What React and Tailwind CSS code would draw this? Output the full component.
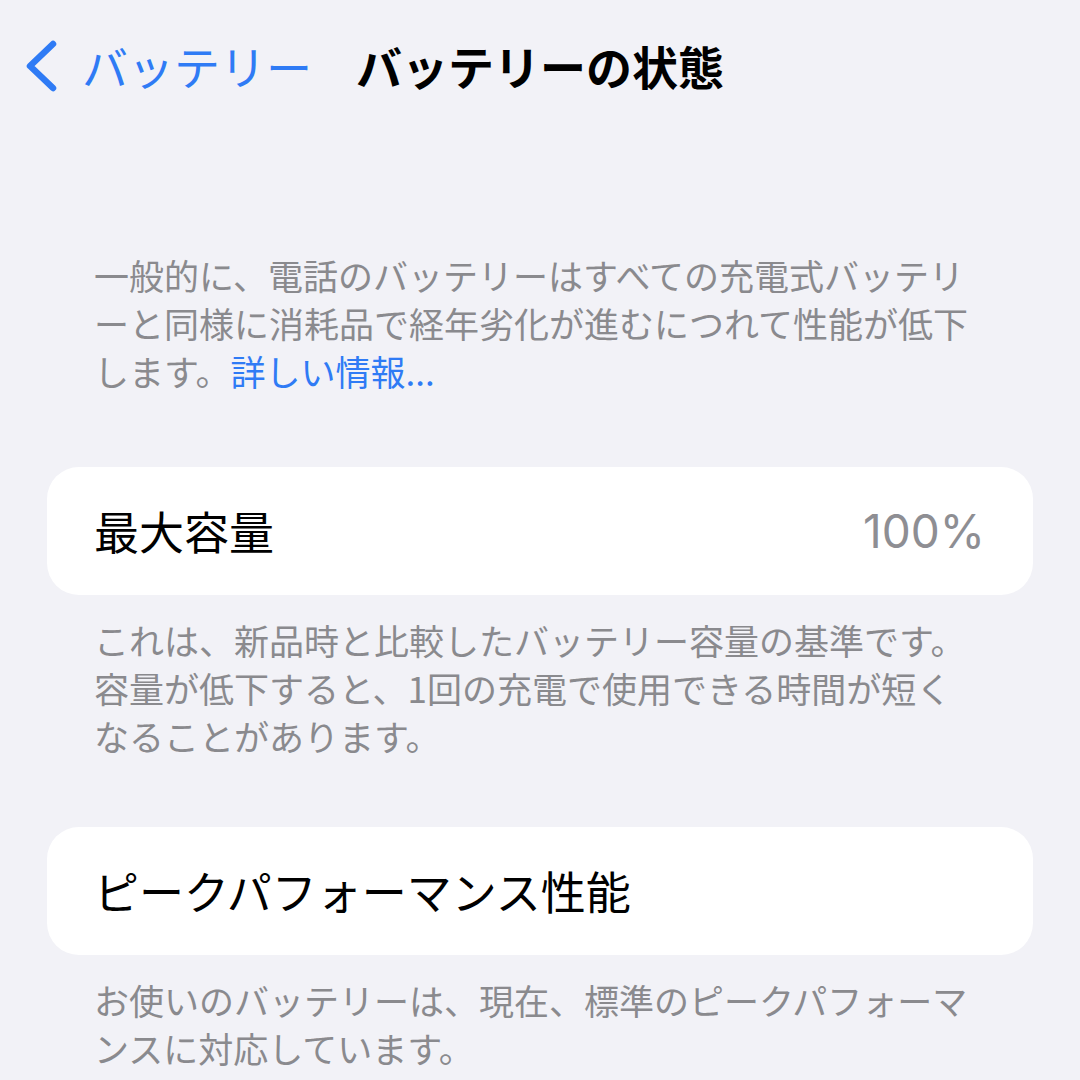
import React from 'react';

const FONT = '"Noto Sans CJK JP", "Noto Sans", Inter, sans-serif';

const Footnote = ({ lines, className = '' }) => (
  <div className={`px-[94px] text-[35px] leading-[48px] text-[#8a8a8e] ${className}`}>
    {lines.map((line, i) => (
      <div key={i} className="whitespace-nowrap">{line}</div>
    ))}
  </div>
);

const Card = ({ label, value, className = '' }) => (
  <div className={`mx-[47px] h-[128px] rounded-[32px] bg-white flex items-center justify-between pl-[47px] pr-[48px] ${className}`}>
    <span className="text-[45px] text-black">{label}</span>
    {value && <span className="text-[46px] text-[#8e8e93] font-['Inter']">{value}</span>}
  </div>
);

export default function App() {
  return (
    <div className="w-[1080px] h-[1080px] overflow-hidden bg-[#f2f2f7]" style={{ fontFamily: FONT }}>
      {/* nav bar */}
      <div className="h-[130px] flex items-center pl-[20px]">
        <svg width="40" height="60" viewBox="0 0 40 60" fill="none">
          <path d="M33 9 L10 31 L33 53" stroke="#2f7bf5" strokeWidth="6.5" strokeLinecap="round" strokeLinejoin="round" />
        </svg>
        <span className="ml-[22px] text-[46px] text-[#2f7bf5]">バッテリー</span>
        <span className="ml-[44px] text-[46px] font-bold text-black">バッテリーの状態</span>
      </div>

      <Footnote
        className="mt-[121px]"
        lines={[
          '一般的に、電話のバッテリーはすべての充電式バッテリ',
          'ーと同様に消耗品で経年劣化が進むにつれて性能が低下',
          <>します。<span className="text-[#2f7bf5]">詳しい情報...</span></>,
        ]}
      />

      <Card className="mt-[72px]" label="最大容量" value="100%" />

      <Footnote
        className="mt-[21px]"
        lines={[
          'これは、新品時と比較したバッテリー容量の基準です。',
          '容量が低下すると、1回の充電で使用できる時間が短く',
          'なることがあります。',
        ]}
      />

      <Card className="mt-[67px]" label="ピークパフォーマンス性能" />

      <Footnote
        className="mt-[21px]"
        lines={[
          'お使いのバッテリーは、現在、標準のピークパフォーマ',
          'ンスに対応しています。',
        ]}
      />
    </div>
  );
}
